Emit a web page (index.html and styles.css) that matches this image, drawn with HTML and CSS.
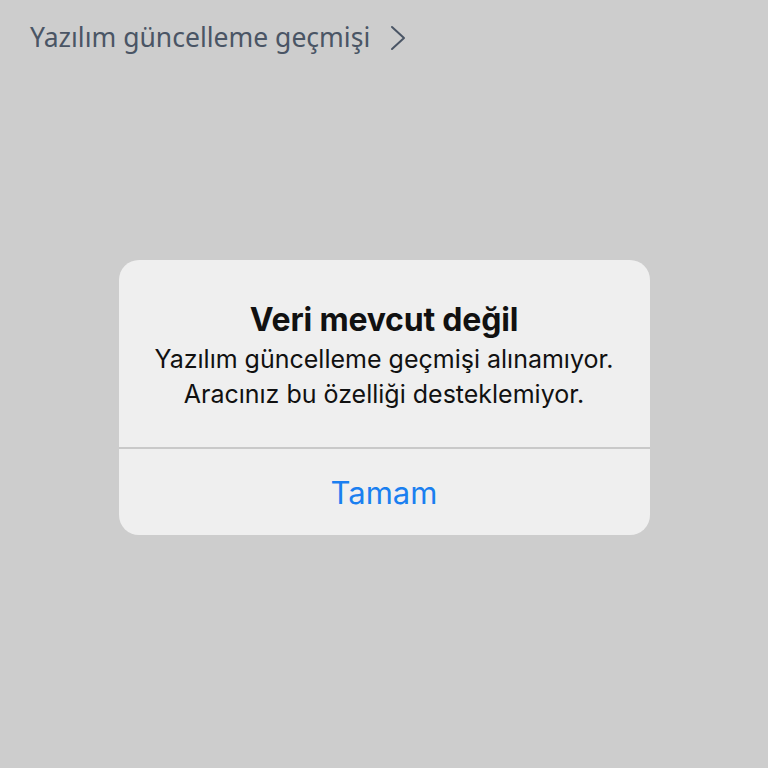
FILE: index.html
```html
<!DOCTYPE html>
<html lang="tr">
<head>
  <meta charset="UTF-8">
  <meta name="viewport" content="width=device-width, initial-scale=1.0">
  <title>Veri mevcut değil</title>
  <link rel="stylesheet" href="styles.css">
</head>
<body>
  <div class="screen">
    <a class="history-link" href="#">
      <span>Yazılım güncelleme geçmişi</span>
      <svg class="chevron" width="16" height="26" viewBox="0 0 16 26">
        <path d="M2 2 L14 13 L2 24" fill="none" stroke="currentColor" stroke-width="2" stroke-linecap="round" stroke-linejoin="round"/>
      </svg>
    </a>

    <div class="overlay">
      <div class="alert">
        <div class="alert-body">
          <h1 class="alert-title">Veri mevcut değil</h1>
          <p class="alert-text">Yazılım güncelleme geçmişi alınamıyor.<br>Aracınız bu özelliği desteklemiyor.</p>
        </div>
        <button class="alert-btn">Tamam</button>
      </div>
    </div>
  </div>
</body>
</html>
```

FILE: styles.css
```css
:root {
  --bg-page: #cdcdcd;
  --bg-alert: #efefef;
  --text-link: #4a5565;
  --text-main: #111111;
  --divider: #c9c9c9;
  --blue: #1a7ff0;
}
* { box-sizing: border-box; margin: 0; padding: 0; }
html, body { height: 100%; }
body {
  background: var(--bg-page);
  font-family: 'Inter', 'Noto Sans', sans-serif;
  overflow: hidden;
}
.screen {
  height: 100vh;
  display: flex;
  flex-direction: column;
}
/* top row */
.history-link {
  display: flex;
  align-items: center;
  gap: 20px;
  padding: 19px 0 0 30px;
  color: var(--text-link);
  text-decoration: none;
  font-family: 'Noto Sans', sans-serif;
  font-size: 26.5px;
  line-height: 36px;
}
.chevron { color: var(--text-link); margin-top: 2px; }

/* dialog */
.overlay {
  display: flex;
  justify-content: center;
  padding-top: 205px;
}
.alert {
  width: 531px;
  height: 275px;
  background: var(--bg-alert);
  border-radius: 20px;
  display: flex;
  flex-direction: column;
  overflow: hidden;
}
.alert-body {
  height: 189px;
  border-bottom: 2px solid var(--divider);
  text-align: center;
  padding-top: 39px;
  color: var(--text-main);
}
.alert-title {
  font-size: 32px;
  font-weight: 700;
  line-height: 42px;
  letter-spacing: -0.2px;
}
.alert-text {
  margin-top: 1px;
  font-size: 25px;
  line-height: 35px;
  font-weight: 400;
}
.alert-btn {
  flex: 1;
  border: none;
  background: none;
  color: var(--blue);
  font-family: inherit;
  font-size: 31px;
  font-weight: 400;
  cursor: pointer;
}
```
